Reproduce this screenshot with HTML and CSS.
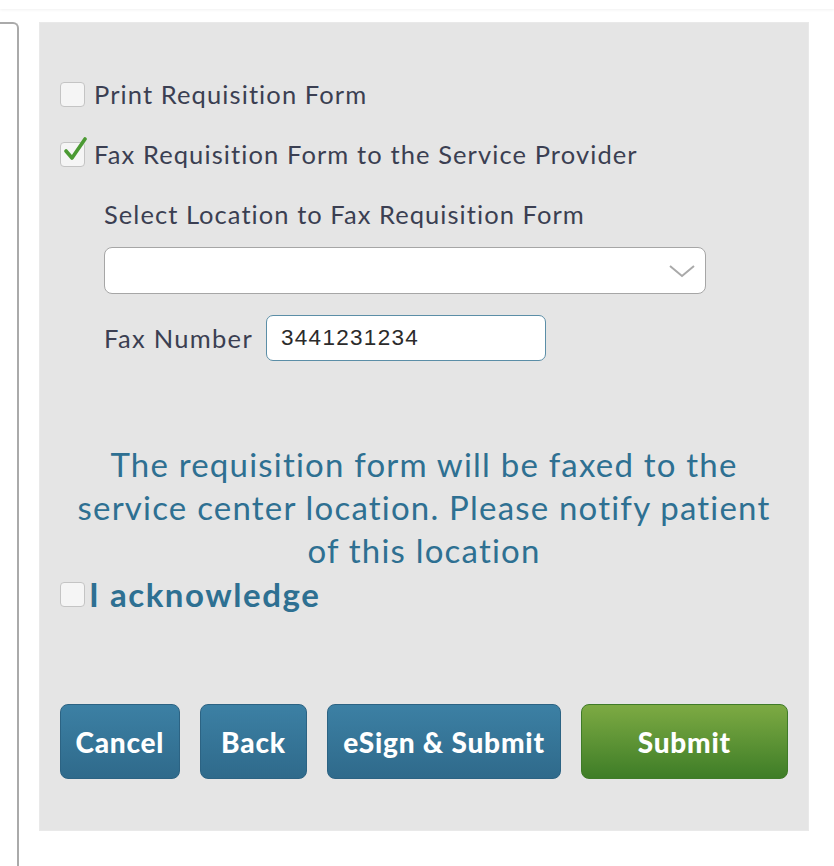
FILE: index.html
```html
<!DOCTYPE html>
<html lang="en">
<head>
<meta charset="utf-8">
<title>Requisition</title>
<link rel="stylesheet" href="styles.css">
</head>
<body>
<div class="topbar"></div>
<div class="layout">
  <div class="side"></div>
  <div class="panel">
    <label class="check-row">
      <span class="box"></span>
      <span class="label">Print Requisition Form</span>
    </label>
    <label class="check-row">
      <span class="box checked">
        <svg class="tick" viewBox="0 0 26 26" width="26" height="26"><path d="M4 14 L10 21 L23 2" fill="none" stroke="#4b9a33" stroke-width="3.6" stroke-linecap="round" stroke-linejoin="round"/></svg>
      </span>
      <span class="label">Fax Requisition Form to the Service Provider</span>
    </label>
    <div class="fax-section">
      <div class="sub-label">Select Location to Fax Requisition Form</div>
      <div class="select">
        <svg class="chev" viewBox="0 0 28 14" width="28" height="14"><path d="M2 2 L14 12 L26 2" fill="none" stroke="#a9a9a9" stroke-width="2"/></svg>
      </div>
      <div class="fax-row">
        <span class="sub-label inline">Fax Number</span>
        <div class="input">3441231234</div>
      </div>
    </div>
    <p class="message">The requisition form will be faxed to the<br>service center location. Please notify patient<br>of this location</p>
    <label class="ack-row">
      <span class="box"></span>
      <span class="ack">I acknowledge</span>
    </label>
    <div class="buttons">
      <button class="btn blue btn-cancel">Cancel</button>
      <button class="btn blue btn-back">Back</button>
      <button class="btn blue btn-esign">eSign &amp; Submit</button>
      <button class="btn green btn-submit">Submit</button>
    </div>
  </div>
</div>
</body>
</html>
```

FILE: styles.css
```css
* { box-sizing: border-box; }
html, body { margin: 0; padding: 0; background: #fff; }
body {
  font-family: Lato, "Open Sans", sans-serif;
  width: 834px;
  height: 866px;
  overflow: hidden;
}
.topbar {
  height: 9px;
  background: #fff;
  box-shadow: 0 1px 3px rgba(0,0,0,0.06);
  position: relative;
}
.layout {
  display: flex;
  padding-top: 13px;
  gap: 20px;
}
.side {
  width: 19px;
  height: 860px;
  border-top: 2px solid #aaa;
  border-right: 2px solid #aaa;
  border-top-right-radius: 6px;
}
.panel {
  width: 770px;
  height: 809px;
  background: #e5e5e5;
  border: 1px solid #e9e9e9;
  padding: 41px 20px 0 20px;
  display: flex;
  flex-direction: column;
}
.check-row {
  height: 60px;
  display: flex;
  align-items: center;
  gap: 9px;
}
.box {
  width: 25px;
  height: 25px;
  flex: none;
  background: #f5f5f5;
  border: 1.5px solid #c4c4c4;
  border-radius: 4px;
  position: relative;
}
.tick {
  position: absolute;
  left: 1px;
  top: -6px;
}
.label {
  font-size: 25.5px;
  color: #3b3f52;
  letter-spacing: 1.1px;
}
.fax-section {
  padding-left: 44px;
}
.sub-label {
  height: 60px;
  display: flex;
  align-items: center;
  font-size: 25.5px;
  letter-spacing: 1.05px;
  color: #3b3f52;
}
.sub-label.inline { height: auto; letter-spacing: 1.3px; }
.select {
  margin-top: 3px;
  width: 602px;
  height: 47px;
  background: #fff;
  border: 1.5px solid #a6a6a6;
  border-radius: 8px;
  display: flex;
  align-items: center;
  justify-content: flex-end;
  padding-right: 9px;
}
.fax-row {
  margin-top: 21px;
  display: flex;
  align-items: center;
  gap: 13px;
}
.input {
  width: 280px;
  height: 46px;
  background: #fff;
  border: 1.5px solid #5b8ea7;
  border-radius: 7px;
  display: flex;
  align-items: center;
  padding-left: 14px;
  font-family: "Liberation Sans", Arial, sans-serif;
  font-size: 22.5px;
  letter-spacing: 1.3px;
  color: #2b2b2b;
}
.message {
  margin: 82px 0 0;
  text-align: center;
  font-size: 33px;
  letter-spacing: 1.2px;
  line-height: 43px;
  color: #2e7092;
}
.ack-row {
  height: 44px;
  display: flex;
  align-items: center;
  gap: 4px;
}
.ack {
  font-size: 33px;
  font-weight: bold;
  letter-spacing: 1.55px;
  color: #2e7092;
}
.buttons {
  margin-top: 88px;
  display: flex;
  gap: 20px;
}
.btn {
  height: 75px;
  border-radius: 8px;
  font-family: Lato, sans-serif;
  font-weight: 900;
  font-size: 28px;
  letter-spacing: 0.8px;
  color: #fff;
  padding: 0;
  cursor: pointer;
}
.blue {
  background: linear-gradient(#3c80a4, #2f6a8b);
  border: 1px solid #2c6383;
}
.green {
  background: linear-gradient(#7daa43, #3e7d27);
  border: 1px solid #3f7b28;
}
.btn-cancel { width: 120px; }
.btn-back { width: 108px; }
.btn-esign { width: 234px; }
.btn-submit { width: 208px; }
```
